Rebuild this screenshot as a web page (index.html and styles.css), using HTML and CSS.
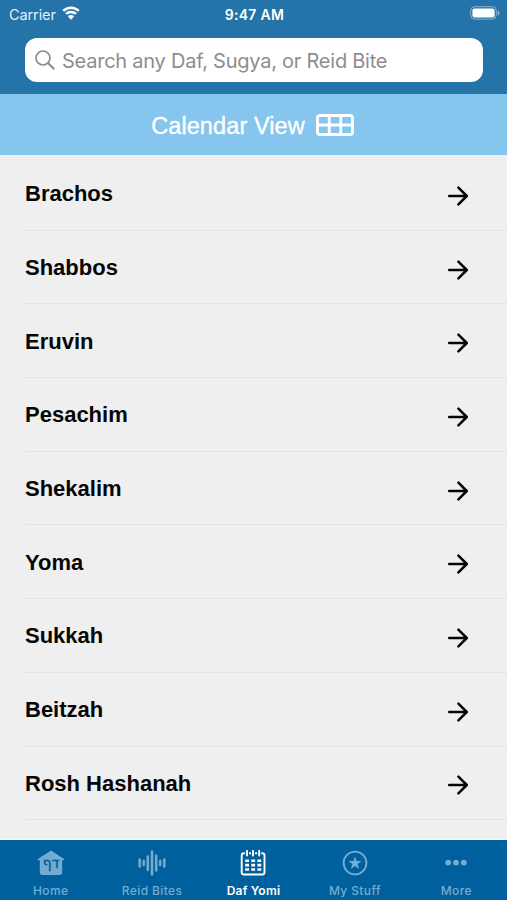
FILE: index.html
```html
<!DOCTYPE html>
<html lang="en">
<head>
  <meta charset="UTF-8" />
  <meta name="viewport" content="width=device-width, initial-scale=1.0"/>
  <title>Daf Yomi</title>
  <link rel="stylesheet" href="styles.css">
</head>
<body>
  <svg class="sprite" aria-hidden="true">
    <symbol id="arrow" viewBox="0 0 20 20">
      <path d="M1.2 10H18.2M10.4 1.6L18.8 10L10.4 18.4" fill="none" stroke="currentColor" stroke-width="2.5" stroke-linecap="round" stroke-linejoin="round"/>
    </symbol>
  </svg>

  <header class="header">
    <div class="status-bar">
      <div class="carrier">
        <span>Carrier</span>
        <svg class="wifi" viewBox="0 0 18 14">
          <path d="M1.2 4.9a11.2 11.2 0 0 1 15.6 0M4 7.9a7.2 7.2 0 0 1 10 0" fill="none" stroke="currentColor" stroke-width="2.5"/>
          <path d="M9 13.7L5.8 10.3a4.6 4.6 0 0 1 6.4 0z" fill="currentColor"/>
        </svg>
      </div>
      <span class="time">9:47 AM</span>
      <svg class="battery" viewBox="0 0 30 14">
        <rect x=".7" y=".7" width="25.6" height="12.4" rx="4" fill="none" stroke="currentColor" stroke-opacity=".45"/>
        <rect x="2.4" y="2.4" width="22.2" height="9" rx="2.2" fill="currentColor"/>
        <path d="M27.8 4.6v4.6q1.8-.8 1.8-2.3t-1.8-2.3z" fill="currentColor" fill-opacity=".5"/>
      </svg>
    </div>
    <div class="search">
      <svg class="search-icon" viewBox="0 0 20 20">
        <circle cx="8" cy="8" r="7" fill="none" stroke="currentColor" stroke-width="1.7"/>
        <path d="M13 13L18.6 18.6" stroke="currentColor" stroke-width="2.1" stroke-linecap="round"/>
      </svg>
      <span class="placeholder">Search any Daf, Sugya, or Reid Bite</span>
    </div>
  </header>

  <a class="calendar-link">
    <span>Calendar View</span>
    <svg class="grid-icon" viewBox="0 0 38 22">
      <path d="M4 1.5H34Q36.5 1.5 36.5 4V18Q36.5 20.5 34 20.5H4Q1.5 20.5 1.5 18V4Q1.5 1.5 4 1.5zM13.2 1.5V20.5M24.8 1.5V20.5M1.5 11H36.5" fill="none" stroke="currentColor" stroke-width="2.9"/>
    </svg>
  </a>

  <main class="list">
    <a class="row"><span>Brachos</span><svg class="arrow"><use href="#arrow"/></svg></a>
    <a class="row"><span>Shabbos</span><svg class="arrow"><use href="#arrow"/></svg></a>
    <a class="row"><span>Eruvin</span><svg class="arrow"><use href="#arrow"/></svg></a>
    <a class="row"><span>Pesachim</span><svg class="arrow"><use href="#arrow"/></svg></a>
    <a class="row"><span>Shekalim</span><svg class="arrow"><use href="#arrow"/></svg></a>
    <a class="row"><span>Yoma</span><svg class="arrow"><use href="#arrow"/></svg></a>
    <a class="row"><span>Sukkah</span><svg class="arrow"><use href="#arrow"/></svg></a>
    <a class="row"><span>Beitzah</span><svg class="arrow"><use href="#arrow"/></svg></a>
    <a class="row"><span>Rosh Hashanah</span><svg class="arrow"><use href="#arrow"/></svg></a>
  </main>

  <nav class="tabs">
    <a class="tab">
      <svg viewBox="0 0 28 26">
        <path d="M14 .5L27.5 9.2L26.6 10.5L25.2 9.8V22Q25.2 25 22.2 25H5.8Q2.8 25 2.8 22V9.8L1.4 10.5L.5 9.2z" fill="currentColor"/>
        <text class="daf" x="14" y="18.3" text-anchor="middle">דף</text>
      </svg>
      <span>Home</span>
    </a>
    <a class="tab">
      <svg viewBox="0 0 28 26">
        <path d="M1.7 9.5V16.5M5.7 11V15M9.8 6.5V20M14 1.5V24.5M18.2 5.5V20.5M22.2 11V15M26.3 9.5V16.5" fill="none" stroke="currentColor" stroke-width="2.5" stroke-linecap="round"/>
      </svg>
      <span>Reid Bites</span>
    </a>
    <a class="tab current">
      <svg viewBox="0 0 28 26">
        <rect x="2.7" y="3.2" width="22.8" height="21.3" rx="2.2" fill="none" stroke="currentColor" stroke-width="1.9"/>
        <path d="M8 .5V6M14 .5V6M20.2 .5V6" stroke="#00609d" stroke-width="4.2"/>
        <path d="M8 .8V5.6M14 .8V5.6M20.2 .8V5.6" stroke="currentColor" stroke-width="1.9" stroke-linecap="round"/>
        <path d="M6.2 10.7H22.2M6.2 15.1H22.2M6.2 19.5H22.2" stroke="currentColor" stroke-width="2.6" stroke-dasharray="3.8 2.3"/>
      </svg>
      <span>Daf Yomi</span>
    </a>
    <a class="tab">
      <svg viewBox="0 0 28 26">
        <circle cx="14" cy="13" r="11.4" fill="none" stroke="currentColor" stroke-width="1.9"/>
        <path d="M14 6.2L15.6 11H20.7L16.6 14.1L18.1 19L14 16L9.9 19L11.4 14.1L7.3 11H12.4z" fill="currentColor"/>
      </svg>
      <span>My Stuff</span>
    </a>
    <a class="tab">
      <svg viewBox="0 0 28 26">
        <g fill="currentColor">
          <circle cx="6.2" cy="12.6" r="2.9"/>
          <circle cx="14" cy="12.6" r="2.9"/>
          <circle cx="21.8" cy="12.6" r="2.9"/>
        </g>
      </svg>
      <span>More</span>
    </a>
  </nav>
</body>
</html>
```
FILE: styles.css
```css
* {
  box-sizing: border-box;
  margin: 0;
  padding: 0;
}

body {
  height: 900px;
  display: flex;
  flex-direction: column;
  font-family: Inter, sans-serif;
  background: #efefef;
  color: #060606;
  overflow: hidden;
}

.sprite {
  display: none;
}

.header {
  height: 94px;
  flex: none;
  background: #2474a9;
  color: #fff;
}

.status-bar {
  height: 38px;
  padding: 0 7px 12px 9px;
  display: grid;
  grid-template-columns: 1fr auto 1fr;
  align-items: center;
  font-size: 14.5px;
}

.carrier {
  display: flex;
  align-items: center;
  gap: 6px;
  color: #e4f0f7;
}

.carrier span {
  padding-top: 2px;
  letter-spacing: -0.1px;
}

.wifi {
  width: 18px;
  height: 14px;
  color: #fff;
}

.time {
  padding-top: 2px;
  font-size: 14px;
  font-weight: 600;
  letter-spacing: 0.3px;
}

.battery {
  width: 30px;
  height: 14px;
  justify-self: end;
}

.search {
  height: 44px;
  margin: 0 24px 0 25px;
  padding-left: 10px;
  display: flex;
  align-items: center;
  gap: 7px;
  background: #fff;
  border-radius: 12px;
  color: #8d8d91;
}

.search-icon {
  width: 20px;
  height: 20px;
}

.placeholder {
  padding-top: 1px;
  font-size: 20px;
  letter-spacing: -0.24px;
  white-space: nowrap;
}

.calendar-link {
  height: 60.5px;
  flex: none;
  display: flex;
  align-items: center;
  justify-content: center;
  gap: 11px;
  padding: 2px 2px 0 0;
  background: #85c5ee;
  color: #fff;
  font-family: "Liberation Sans", sans-serif;
  font-size: 23.5px;
  -webkit-text-stroke: 0.35px currentColor;
}

.calendar-link span {
  padding-top: 2px;
  letter-spacing: 0.1px;
}

.grid-icon {
  width: 38px;
  height: 22px;
}

.list {
  flex: 1;
  padding: 2.5px 0 0 25px;
}

.row {
  height: 73.7px;
  padding-right: 39px;
  display: flex;
  align-items: center;
  justify-content: space-between;
  border-bottom: 1.5px solid #e3e3e4;
  font-family: "Liberation Sans", sans-serif;
  font-size: 22px;
  font-weight: 700;
}

.row span {
  padding-top: 2px;
}

.arrow {
  width: 20px;
  height: 20px;
  margin-top: 5px;
}

.tabs {
  height: 61px;
  flex: none;
  display: grid;
  grid-template-columns: repeat(5, 1fr);
  border-top: 1px solid #f8f8f8;
  background: #00609d;
  color: #73acd0;
}

.tab {
  display: flex;
  flex-direction: column;
  align-items: center;
  gap: 7px;
  padding-top: 10px;
  font-size: 12px;
  line-height: 15px;
  font-weight: 500;
  letter-spacing: 0.4px;
}

.tab svg {
  width: 28px;
  height: 26px;
}

.tab.current {
  color: #fff;
  font-weight: 600;
  letter-spacing: 0.2px;
}

.daf {
  font-family: "DejaVu Sans", sans-serif;
  font-size: 14px;
  font-weight: 400;
  letter-spacing: 0;
  fill: #00609d;
  stroke: #00609d;
  stroke-width: 0.4px;
}
```
